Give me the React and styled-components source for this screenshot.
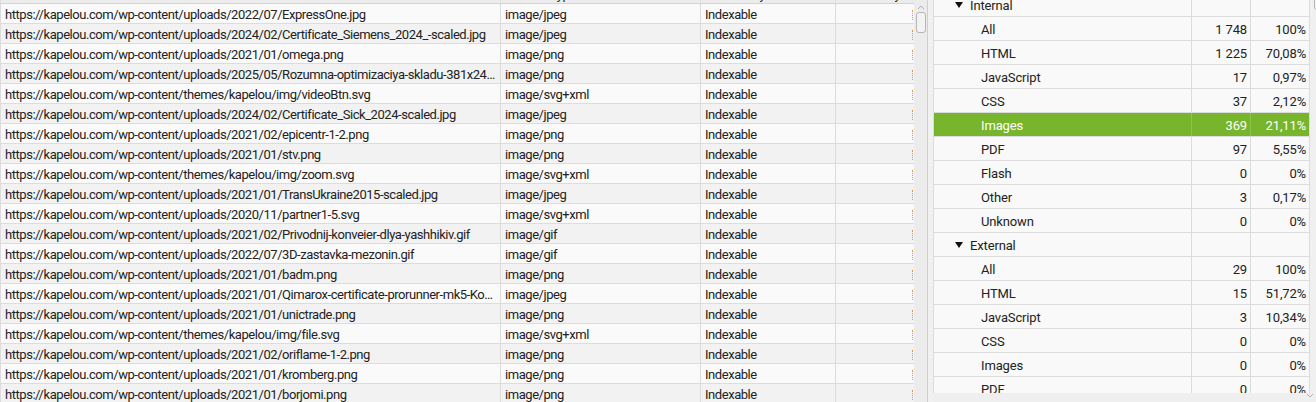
import React from 'react'
import styled, { createGlobalStyle } from 'styled-components'

const GlobalStyle = createGlobalStyle`
  html, body {
    margin: 0;
    padding: 0;
    background: #efefef;
    overflow: hidden;
  }
  body {
    font-family: Roboto, "Liberation Sans", sans-serif;
    font-size: 13px;
    color: #222;
  }
`

const base = 'https://kapelou.com/wp-content/'

const files = [
  ['uploads/2022/07/ExpressOne.jpg', 'image/jpeg'],
  ['uploads/2024/02/Certificate_Siemens_2024_-scaled.jpg', 'image/jpeg'],
  ['uploads/2021/01/omega.png', 'image/png'],
  ['uploads/2025/05/Rozumna-optimizaciya-skladu-381x240.png', 'image/png'],
  ['themes/kapelou/img/videoBtn.svg', 'image/svg+xml'],
  ['uploads/2024/02/Certificate_Sick_2024-scaled.jpg', 'image/jpeg'],
  ['uploads/2021/02/epicentr-1-2.png', 'image/png'],
  ['uploads/2021/01/stv.png', 'image/png'],
  ['themes/kapelou/img/zoom.svg', 'image/svg+xml'],
  ['uploads/2021/01/TransUkraine2015-scaled.jpg', 'image/jpeg'],
  ['uploads/2020/11/partner1-5.svg', 'image/svg+xml'],
  ['uploads/2021/02/Privodnij-konveier-dlya-yashhikiv.gif', 'image/gif'],
  ['uploads/2022/07/3D-zastavka-mezonin.gif', 'image/gif'],
  ['uploads/2021/01/badm.png', 'image/png'],
  ['uploads/2021/01/Qimarox-certificate-prorunner-mk5-Kopiya.jpg', 'image/jpeg'],
  ['uploads/2021/01/unictrade.png', 'image/png'],
  ['themes/kapelou/img/file.svg', 'image/svg+xml'],
  ['uploads/2021/02/oriflame-1-2.png', 'image/png'],
  ['uploads/2021/01/kromberg.png', 'image/png'],
  ['uploads/2021/01/borjomi.png', 'image/png'],
]

const groups = [
  {
    name: 'Internal',
    items: [
      ['All', '1 748', '100%'],
      ['HTML', '1 225', '70,08%'],
      ['JavaScript', '17', '0,97%'],
      ['CSS', '37', '2,12%'],
      ['Images', '369', '21,11%', true],
      ['PDF', '97', '5,55%'],
      ['Flash', '0', '0%'],
      ['Other', '3', '0,17%'],
      ['Unknown', '0', '0%'],
    ],
  },
  {
    name: 'External',
    items: [
      ['All', '29', '100%'],
      ['HTML', '15', '51,72%'],
      ['JavaScript', '3', '10,34%'],
      ['CSS', '0', '0%'],
      ['Images', '0', '0%'],
      ['PDF', '0', '0%'],
    ],
  },
]

//Layout
const Screen = styled.div`
  display: flex;
  width: 1316px;
  height: 402px;
  overflow: hidden;
`

const LeftPane = styled.div`
  display: flex;
  width: 927px;
  height: 402px;
  border-right: 1px solid #cfcfcf;
  flex-shrink: 0;
`

const Gap = styled.div`
  width: 5px;
  background: #f1f1f1;
  flex-shrink: 0;
`

const Table = styled.div`
  width: 913px;
  overflow: hidden;
  border-left: 1px solid #dcdcdc;
  background: #f7f7f7;
  letter-spacing: -0.45px;
`

const Row = styled.div`
  display: grid;
  grid-template-columns: 500px 200px 135px 77px;
  height: 19px;
  border-bottom: 1px solid #dcdcdc;
  background: ${p => (p.$odd ? '#f2f2f2' : '#fafafa')};
`

const HeaderRow = styled(Row)`
  margin-top: -16px;
  background: #ececec;
  border-bottom: 1px solid #d4d4d4;
`

const Cell = styled.div`
  padding: 1px 4px 0;
  line-height: 19px;
  border-right: 1px solid #dcdcdc;
  white-space: nowrap;
  overflow: hidden;
  text-overflow: ellipsis;
  &:last-child {
    border-right: none;
    position: relative;
  }
`

const Dots = styled.span`
  position: absolute;
  right: 0;
  top: 6px;
  height: 10px;
  border-right: 1px dotted #e8962e;
`

const VScroll = styled.div`
  width: 13px;
  background: #ececec;
  display: flex;
  flex-direction: column;
  align-items: center;
  padding-top: 5px;
  gap: 2px;
`

const Thumb = styled.div`
  width: 8px;
  height: 19px;
  border: 1px solid #b5b5b5;
  border-radius: 3px;
  background: #f3f3f3;
`

const RightPane = styled.div`
  display: flex;
  flex-direction: column;
  flex: 1;
  height: 402px;
`

const RightBody = styled.div`
  display: flex;
  height: 393px;
`

const Tree = styled.div`
  width: 375px;
  overflow: hidden;
  border-left: 1px solid #dcdcdc;
  border-right: 1px solid #dcdcdc;
  background: #f9f9f9;
  letter-spacing: -0.15px;
`

const TreeInner = styled.div`
  margin-top: -7px;
`

const TreeRow = styled.div`
  display: grid;
  grid-template-columns: 258px 59px 58px;
  height: 23px;
  border-bottom: 1px solid #dcdcdc;
  background: ${p => (p.$selected ? '#76b52c' : '#f9f9f9')};
  color: ${p => (p.$selected ? '#fff' : '#222')};
`

const TreeCell = styled.div`
  display: flex;
  align-items: center;
  justify-content: ${p => (p.$num ? 'flex-end' : 'flex-start')};
  padding: ${p => (p.$num ? '2px 3px 0 0' : `2px 0 0 ${p.$indent}px`)};
  border-right: 1px solid ${p => (p.$selected ? '#8cc450' : '#dcdcdc')};
  white-space: nowrap;
  &:last-child {
    border-right: none;
  }
`

const Arrow = styled.span`
  width: 0;
  height: 0;
  border-left: 4px solid transparent;
  border-right: 4px solid transparent;
  border-top: 6px solid #111;
  margin: 0 7px 2px 0;
`

const SideScroll = styled.div`
  flex: 1;
  background: #f0f0f0;
  position: relative;
`

const SideThumb = styled.div`
  position: absolute;
  left: 4px;
  top: -4px;
  width: 8px;
  height: 12px;
  border: 1px solid #b5b5b5;
  border-radius: 3px;
  background: #f6f6f6;
`

const BottomBar = styled.div`
  flex: 1;
  background: #efefef;
  display: flex;
  justify-content: flex-end;
  padding-right: 2px;
`

const Chevron = ({ up }) => (
  <svg width="8" height="5" viewBox="0 0 8 5">
    <path
      d={up ? 'M1 4 L4 1 L7 4' : 'M1 1 L4 4 L7 1'}
      fill="none"
      stroke="#b0b0b0"
      strokeWidth="1"
    />
  </svg>
)

const App = () => {
  return (
    <>
      <GlobalStyle />
      <Screen>
        <LeftPane>
          <Table>
            <HeaderRow>
              <Cell>Address</Cell>
              <Cell>Content Type</Cell>
              <Cell>Indexability</Cell>
              <Cell>Indexability Status</Cell>
            </HeaderRow>
            {files.map(([path, type], i) => (
              <Row key={path} $odd={i % 2 === 1}>
                <Cell>{base + path}</Cell>
                <Cell>{type}</Cell>
                <Cell>Indexable</Cell>
                <Cell>
                  <Dots />
                </Cell>
              </Row>
            ))}
          </Table>
          <VScroll>
            <Chevron up />
            <Thumb />
          </VScroll>
        </LeftPane>
        <Gap />
        <RightPane>
          <RightBody>
            <Tree>
              <TreeInner>
                {groups.map(g => (
                  <React.Fragment key={g.name}>
                    <TreeRow>
                      <TreeCell $indent={21}>
                        <Arrow />
                        {g.name}
                      </TreeCell>
                      <TreeCell $num />
                      <TreeCell $num />
                    </TreeRow>
                    {g.items.map(([label, count, pct, sel]) => (
                      <TreeRow key={g.name + label} $selected={sel}>
                        <TreeCell $indent={47} $selected={sel}>{label}</TreeCell>
                        <TreeCell $num $selected={sel}>{count}</TreeCell>
                        <TreeCell $num $selected={sel}>{pct}</TreeCell>
                      </TreeRow>
                    ))}
                  </React.Fragment>
                ))}
              </TreeInner>
            </Tree>
            <SideScroll>
              <SideThumb />
            </SideScroll>
          </RightBody>
          <BottomBar>
            <Chevron />
          </BottomBar>
        </RightPane>
      </Screen>
    </>
  )
}

export default App
